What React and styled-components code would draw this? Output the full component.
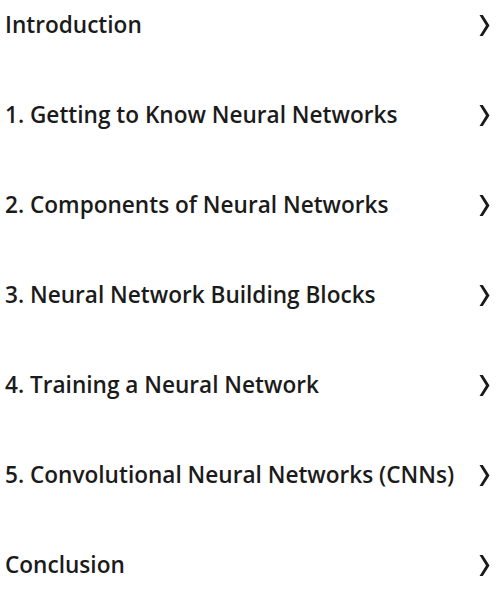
import React from "react";
import styled, { createGlobalStyle } from "styled-components";

const GlobalStyle = createGlobalStyle`
  body {
    margin: 0;
    background: #fff;
    font-family: "Open Sans", "Noto Sans", sans-serif;
    color: #1b1b1b;
  }
`;

const sections = [
  "Introduction",
  "1. Getting to Know Neural Networks",
  "2. Components of Neural Networks",
  "3. Neural Network Building Blocks",
  "4. Training a Neural Network",
  "5. Convolutional Neural Networks (CNNs)",
  "Conclusion",
];

const List = styled.div`
  display: flex;
  flex-direction: column;
  gap: 42px;
  padding: 0 6px 0 5px;
`;

const Row = styled.div`
  display: flex;
  align-items: center;
  justify-content: space-between;
  height: 48px;
  cursor: pointer;
`;

const Title = styled.span`
  font-size: 22.6px;
  font-weight: 600;
  white-space: nowrap;
`;

const Chevron = styled.svg`
  flex: none;
  width: 11px;
  height: 23px;
  margin-top: 2px;
  fill: #1b1b1b;
`;

function App() {
  return (
    <>
      <GlobalStyle />
      <List>
        {sections.map((s) => (
          <Row key={s}>
            <Title>{s}</Title>
            <Chevron viewBox="0 0 11 23">
              <path d="M0.5 1 L3.8 1 L10.5 11.5 L3.8 22 L0.5 22 L7 11.5 Z" />
            </Chevron>
          </Row>
        ))}
      </List>
    </>
  );
}

export default App;
